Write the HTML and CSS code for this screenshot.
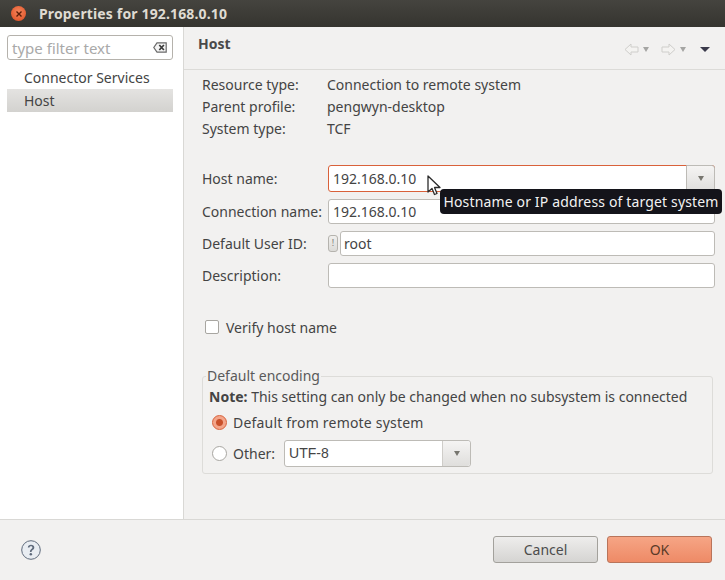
FILE: index.html
```html
<!DOCTYPE html>
<html>
<head>
  <title>Properties for 192.168.0.10</title>
  <link rel="stylesheet" href="styles.css">
</head>
<body>
  <div class="titlebar">
    <span class="close-btn">
      <svg width="8" height="8" viewBox="0 0 8 8"><path d="M1.5 1.5l5 5M6.5 1.500l-5 5" stroke="#5a1d08" stroke-width="1.4"/></svg>
    </span>
    <span class="title">Properties for 192.168.0.10</span>
  </div>

  <div class="main">
    <div class="sidebar">
      <div class="filter">
        <span class="filter-text">type filter text</span>
        <svg width="14" height="11" viewBox="0 0 14 11"><path d="M4 .8h9.2v9.4H4L.8 5.5z" fill="#f4f4f4" stroke="#6a6a6a" stroke-width="1.2"/><path d="M6.3 3l4.6 5M10.9 3L6.3 8" stroke="#3c3c3c" stroke-width="1.7"/></svg>
      </div>
      <div class="tree-item">Connector Services</div>
      <div class="tree-item selected">Host</div>
    </div>

    <div class="content">
      <div class="content-head">
        <span class="content-title">Host</span>
        <div class="nav-icons">
          <svg width="15" height="13" viewBox="0 0 15 13"><path d="M7 1L1 6.5 7 12V9h7V4H7z" fill="#f4f3f1" stroke="#cfcecb"/></svg>
          <span class="arrow-small"></span>
          <svg class="nav-next" width="15" height="13" viewBox="0 0 15 13"><path d="M8 1l6 5.5L8 12V9H1V4h7z" fill="#f4f3f1" stroke="#cfcecb"/></svg>
          <span class="arrow-small"></span>
          <span class="arrow-menu"></span>
        </div>
      </div>

      <div class="info">
        <div class="info-row"><span class="info-label">Resource type:</span><span>Connection to remote system</span></div>
        <div class="info-row"><span class="info-label">Parent profile:</span><span>pengwyn-desktop</span></div>
        <div class="info-row"><span class="info-label">System type:</span><span>TCF</span></div>
      </div>

      <div class="fields">
        <label>Host name:</label>
        <div class="combo focused">
          <span class="combo-text">192.168.0.10</span>
          <span class="combo-btn"><span class="arrow-small"></span></span>
        </div>
        <label>Connection name:</label>
        <div class="input">192.168.0.10</div>
        <label>Default User ID:</label>
        <div class="user-id">
          <span class="info-btn">!</span>
          <div class="input">root</div>
        </div>
        <label>Description:</label>
        <div class="input"></div>
      </div>

      <div class="verify"><span class="checkbox"></span>Verify host name</div>

      <div class="group">
        <span class="group-title">Default encoding</span>
        <div class="note"><b>Note:</b> This setting can only be changed when no subsystem is connected</div>
        <div class="radio-row selected"><span class="radio on"></span>Default from remote system</div>
        <div class="radio-row other">
          <span class="radio"></span>Other:
          <div class="combo encoding">
            <span class="combo-text">UTF-8</span>
            <span class="combo-btn"><span class="arrow-small"></span></span>
          </div>
        </div>
      </div>
    </div>
  </div>

  <div class="footer">
    <svg class="help" width="20" height="20" viewBox="0 0 20 20">
      <circle cx="10" cy="10" r="9.3" fill="#e9edf2" stroke="#5f6b7c" stroke-width="1"/>
      <path d="M6.8 7.6C6.9 5.6 8.3 4.7 10 4.7c1.900 0 3.300 1 3.300 2.800 0 2.400-2.700 2.300-2.700 4.500H8.900c0-3 2.500-3 2.500-4.500 0-.8-.6-1.300-1.400-1.300-.9 0-1.400.5-1.500 1.400z" fill="#5f6b7c"/>
      <circle cx="9.800" cy="14.200" r="1.250" fill="#5f6b7c"/>
    </svg>
    <div class="buttons">
      <button class="btn">Cancel</button>
      <button class="btn ok">OK</button>
    </div>
  </div>

  <svg class="cursor" width="15" height="22" viewBox="0 0 15 22"><path d="M1 1v16l4-3.500 2.500 6 2.500-1-2.500-6H13z" fill="#fff" stroke="#2b2b2b" stroke-width="1.300" stroke-linejoin="round"/></svg>
  <div class="tooltip">Hostname or IP address of target system</div>
</body>
</html>
```

FILE: styles.css
```css
html, body {
  margin: 0;
  height: 100%;
}

body {
  display: flex;
  flex-direction: column;
  height: 580px;
  overflow: hidden;
  font-family: "Noto Sans", sans-serif;
  font-size: 14px;
  color: #444;
  background-color: #f2f1f0;
}

.titlebar {
  display: flex;
  align-items: center;
  height: 27px;
  padding-left: 11px;
  background: linear-gradient(to bottom, #45443f, #35342f);
  flex-shrink: 0;
}

.close-btn {
  display: flex;
  align-items: center;
  justify-content: center;
  width: 15px;
  height: 15px;
  border-radius: 50%;
  background: radial-gradient(circle at 50% 40%, #f5865c, #dd4a1f);
}

.title {
  margin-left: 13px;
  font-weight: bold;
  font-size: 14px;
  letter-spacing: 0.15px;
  color: #dfdbd2;
}

.main {
  display: flex;
  height: 492px;
  border-bottom: 1px solid #d9d8d5;
}

.sidebar {
  width: 184px;
  padding: 8px 10px 0 7px;
  box-sizing: border-box;
  background-color: #fff;
  border-right: 1px solid #d9d8d5;
  flex-shrink: 0;
}

.filter {
  display: flex;
  align-items: center;
  justify-content: space-between;
  height: 25px;
  padding: 0 5px 0 4px;
  box-sizing: border-box;
  border: 1px solid #b5b2ac;
  border-radius: 3px;
  background-color: #fff;
  width: 166px;
}

.filter-text {
  font-size: 15px;
  color: #a9a9a9;
}

.tree-item {
  height: 23px;
  line-height: 23px;
  padding-left: 17px;
  box-sizing: border-box;
  width: 166px;
}

.filter + .tree-item {
  margin-top: 6px;
}

.tree-item.selected {
  background: linear-gradient(to bottom, #e4e3e1, #d3d2cf);
}

.content {
  flex: 1;
  min-width: 0;
}

.content-head {
  display: flex;
  align-items: center;
  justify-content: space-between;
  height: 42px;
  padding: 0 15px 0 14px;
  border-bottom: 1px solid #dcdbd8;
}

.content-title {
  font-weight: bold;
  color: #4a4a4a;
  margin-bottom: 10px;
}

.nav-icons {
  display: flex;
  align-items: center;
  margin-top: 3px;
}

.nav-next {
  margin-left: 12px;
}

.arrow-small {
  display: inline-block;
  margin-left: 4px;
  border-left: 3.500px solid transparent;
  border-right: 3.500px solid transparent;
  border-top: 5px solid #a5a5a3;
}

.arrow-menu {
  display: inline-block;
  margin-left: 14px;
  border-left: 5px solid transparent;
  border-right: 5px solid transparent;
  border-top: 5px solid #3a3a4a;
}

.info {
  padding: 4px 0 0 18px;
}

.info-row {
  display: flex;
  height: 22px;
  line-height: 22px;
}

.info-label {
  width: 125px;
  flex-shrink: 0;
}

.fields {
  display: grid;
  grid-template-columns: 126px 387px;
  grid-template-rows: 27px 25px 25px 25px;
  row-gap: 7px;
  align-items: center;
  margin-top: 25px;
  padding-left: 18px;
}

.input {
  height: 25px;
  line-height: 23px;
  padding-left: 4px;
  box-sizing: border-box;
  border: 1px solid #bdbbb6;
  border-radius: 3px;
  background-color: #fff;
  flex: 1;
}

.combo {
  display: flex;
  height: 27px;
  box-sizing: border-box;
  border: 1px solid #bdbbb6;
  border-radius: 3px;
  background-color: #fff;
}

.combo.focused {
  border-color: #d9613a;
}

.combo-text {
  flex: 1;
  line-height: 25px;
  padding-left: 4px;
}

.combo-btn {
  display: flex;
  align-items: center;
  justify-content: center;
  width: 27px;
  background: linear-gradient(to bottom, #f5f4f3, #dfdedc);
  border-left: 1px solid #cfcdc9;
  border-radius: 0 3px 3px 0;
}

.combo-btn .arrow-small {
  margin-left: 0;
  border-top-color: #77766f;
}

.combo.focused .combo-btn {
  margin: -1px -1px -1px 0;
  border: 1px solid #bdbbb6;
}

.user-id {
  display: flex;
  align-items: center;
  gap: 2px;
}

.user-id .input {
  padding-left: 3px;
}

.info-btn {
  width: 8px;
  height: 15px;
  line-height: 14px;
  text-align: center;
  font-size: 9px;
  color: #777;
  border: 1px solid #b5b3ae;
  border-radius: 3px;
  background: linear-gradient(to bottom, #f0efed, #dcdbd8);
  flex-shrink: 0;
}

.verify {
  display: flex;
  align-items: center;
  height: 20px;
  margin: 29px 0 0 21px;
}

.checkbox {
  width: 12px;
  height: 12px;
  margin-right: 7px;
  border: 1px solid #a8a6a1;
  border-radius: 2px;
  background-color: #fff;
}

.group {
  position: relative;
  width: 511px;
  height: 98px;
  margin: 39px 0 0 18px;
  padding: 10px 0 0 6px;
  box-sizing: border-box;
  border: 1px solid #dddcd9;
  border-radius: 3px;
}

.group-title {
  position: absolute;
  top: -10px;
  left: 3px;
  padding: 0 1px;
  line-height: 18px;
  background-color: #f2f1f0;
  color: #5a5a5a;
}

.note {
  height: 20px;
  line-height: 20px;
  white-space: nowrap;
}

.radio-row {
  display: flex;
  align-items: center;
  height: 22px;
  margin-top: 4px;
  margin-left: 3px;
}

.radio-row.selected {
  letter-spacing: 0.2px;
}

.radio-row.other {
  height: 27px;
  margin-top: 7px;
}

.radio {
  width: 13px;
  height: 13px;
  margin-right: 6px;
  border: 1px solid #a8a6a1;
  border-radius: 50%;
  background-color: #fff;
  flex-shrink: 0;
}

.radio.on {
  background: radial-gradient(circle, #c9502a 0 3px, #f3a58a 4px);
  border-color: #d9613a;
}

.encoding {
  width: 187px;
  margin-left: 9px;
}

.encoding .combo-text {
  font-family: "Liberation Sans", sans-serif;
}

.footer {
  display: flex;
  align-items: center;
  justify-content: space-between;
  flex: 1;
  padding: 0 13px 1px 21px;
}

.buttons {
  display: flex;
  gap: 9px;
}

.btn {
  width: 105px;
  height: 27px;
  font-family: inherit;
  font-size: 14px;
  color: #4c4c4c;
  border: 1px solid #a3a19c;
  border-radius: 3px;
  background: linear-gradient(to bottom, #eeedec, #d5d4d2);
}

.btn.ok {
  color: #5a3a28;
  border-color: #b9745a;
  background: linear-gradient(to bottom, #f6a585, #ee8a66);
}

.cursor {
  position: absolute;
  left: 427px;
  top: 175px;
}

.tooltip {
  position: absolute;
  left: 440px;
  top: 189px;
  width: 282px;
  height: 25px;
  line-height: 25px;
  text-align: center;
  white-space: nowrap;
  letter-spacing: 0.15px;
  color: #f2f2f2;
  background-color: #14141a;
  border-radius: 4px;
}
```
